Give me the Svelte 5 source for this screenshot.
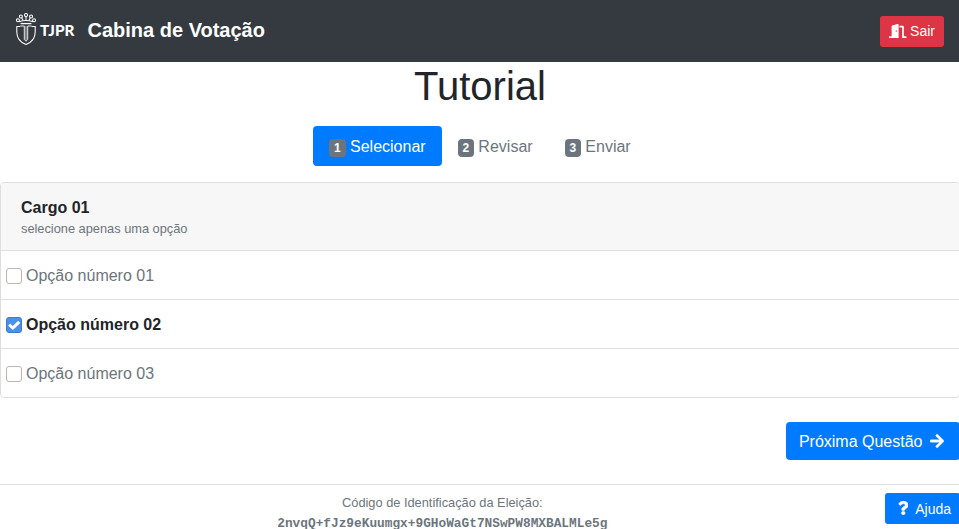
<script>
  const steps = ['Selecionar', 'Revisar', 'Enviar'];
  const options = ['Opção número 01', 'Opção número 02', 'Opção número 03'];
  let current = $state(0);
  let selected = $state(1);
</script>

<div class="page">
  <nav class="navbar">
    <div class="brand">
      <svg class="logo" width="60" height="34" viewBox="0 0 60 34" role="img" aria-label="TJPR">
        <g fill="none" stroke="#fff" stroke-width="1.05">
          <circle cx="1.9" cy="7.2" r="1.5" />
          <circle cx="4.9" cy="3.4" r="1.5" />
          <circle cx="10" cy="2.1" r="1.6" />
          <circle cx="15.1" cy="3.4" r="1.5" />
          <circle cx="18.1" cy="7.2" r="1.5" />
          <path d="M3 8.7Q10 6.2 17 8.7M5.6 4.8L7 7.1M10 3.7V7M14.4 4.8L13 7.1" />
          <path d="M4.6 10.6H15.4" stroke-width="1.3" />
          <path d="M4.3 13.4H.8V19C.8 25.2 4 29.2 10 31.5C16 29.2 19.2 25.2 19.2 19V13.4H15.7" />
          <path d="M4.3 13H8.3V26.6L10 28.2L11.7 26.6V13H15.7" stroke-width=".9" />
          <path d="M10 13V27" stroke-width=".7" />
        </g>
        <text x="24" y="22.8" textLength="34.4" lengthAdjust="spacingAndGlyphs">TJPR</text>
      </svg>
      <span class="brand-name">Cabina de Votação</span>
    </div>
    <button class="btn small danger">
      <svg class="door" viewBox="0 0 640 512"><path d="M624 448h-80V113.45C544 86.19 522.47 64 496 64H384v64h96v384h144c8.84 0 16-7.16 16-16v-32c0-8.84-7.16-16-16-16zM312.24 1.01l-192 49.74C105.99 54.44 96 67.54 96 82.92V448H16c-8.84 0-16 7.16-16 16v32c0 8.84 7.16 16 16 16h336V33.18c0-21.58-19.56-37.41-39.76-32.17zM264 288c-13.25 0-24-14.33-24-32s10.75-32 24-32 24 14.33 24 32-10.75 32-24 32z" /></svg>
      <span>Sair</span>
    </button>
  </nav>

  <h1>Tutorial</h1>

  <div class="pills">
    {#each steps as step, i}
      <button class="pill" class:active={current === i} onclick={() => (current = i)}><span class="badge">{i + 1}</span> {step}</button>
    {/each}
  </div>

  <section class="card">
    <header>
      <strong>Cargo 01</strong>
      <small>selecione apenas uma opção</small>
    </header>
    {#each options as option, i}
      <button class="option" class:checked={selected === i} onclick={() => (selected = i)}>
        <span class="box">
          {#if selected === i}
            <svg viewBox="0 0 16 16"><path d="M3.2 7.6L6.9 11L13.2 4.9" /></svg>
          {/if}
        </span>
        <span class="label">{option}</span>
      </button>
    {/each}
  </section>

  <div class="actions">
    <button class="btn primary next">
      <span>Próxima Questão</span>
      <svg class="arrow" viewBox="0 0 448 512"><path d="M190.5 66.9l22.2-22.2c9.4-9.4 24.6-9.4 33.9 0L441 239c9.4 9.4 9.4 24.6 0 33.9L246.6 467.3c-9.4 9.4-24.6 9.4-33.9 0l-22.2-22.2c-9.5-9.5-9.3-25 .4-34.3L311.4 296H24c-13.3 0-24-10.7-24-24v-32c0-13.3 10.7-24 24-24h287.4L190.9 101.2c-9.8-9.3-10-24.8-.4-34.3z" /></svg>
    </button>
  </div>

  <footer>
    <div class="code">
      <span>Código de Identificação da Eleição:</span>
      <code>2nvqQ+fJz9eKuumgx+9GHoWaGt7NSwPW8MXBALMLe5g</code>
    </div>
    <button class="btn small primary help">
      <svg class="question" viewBox="0 0 384 512"><path d="M202.021 0C122.202 0 70.503 32.703 29.914 91.026c-7.363 10.58-5.093 25.086 5.178 32.874l43.138 32.709c10.373 7.865 25.132 6.026 33.253-4.148 25.049-31.381 43.63-49.449 82.757-49.449 30.764 0 68.816 19.799 68.816 49.631 0 22.552-18.617 34.134-48.993 51.164-35.423 19.86-82.299 44.576-82.299 106.405V320c0 13.255 10.745 24 24 24h72.471c13.255 0 24-10.745 24-24v-5.773c0-42.86 125.268-44.645 125.268-160.627C377.504 66.256 286.902 0 202.021 0zM192 373.459c-38.196 0-69.271 31.075-69.271 69.271 0 38.195 31.075 69.27 69.271 69.27s69.271-31.075 69.271-69.271-31.075-69.27-69.271-69.27z" /></svg>
      <span>Ajuda</span>
    </button>
  </footer>
</div>

<style>
  :global(body) {
    margin: 0;
    background: #fff;
    overflow: hidden;
  }
  .page, .page * {
    box-sizing: border-box;
  }
  .page {
    width: 960px;
    height: 529px;
    overflow: hidden;
    font: 16px/24px "Liberation Sans", Arial, sans-serif;
    color: #212529;
  }
  button {
    margin: 0;
    border: 0;
    background: none;
    font: inherit;
    color: inherit;
    cursor: pointer;
  }
  .navbar {
    display: flex;
    align-items: center;
    justify-content: space-between;
    height: 62px;
    padding: 0 16px;
    background: #343a40;
    color: #fff;
  }
  .brand {
    display: flex;
    align-items: center;
    gap: 11.5px;
  }
  .logo {
    display: block;
    margin-top: -2px;
  }
  .logo text {
    font: 900 14.6px Lato, sans-serif;
    fill: #fff;
  }
  .brand-name {
    font-size: 20px;
    line-height: 30px;
    font-weight: 700;
    margin-top: -2px;
  }
  .btn {
    display: flex;
    align-items: center;
    color: #fff;
    white-space: nowrap;
  }
  .btn svg {
    display: block;
    fill: #fff;
  }
  .small {
    height: 31px;
    padding: 0 9px;
    border-radius: 3px;
    font-size: 14px;
    line-height: 21px;
  }
  .danger {
    gap: 3.5px;
    background: #dc3545;
  }
  .primary {
    background: #007bff;
  }
  .door {
    width: 17.5px;
    height: 14px;
    margin-top: -1px;
  }
  h1 {
    margin: 0 0 16px;
    font-size: 40px;
    line-height: 48px;
    font-weight: 400;
    text-align: center;
  }
  .pills {
    display: flex;
    justify-content: center;
    margin-bottom: 16px;
  }
  .pill {
    height: 40px;
    padding: 9px 16px 7px;
    border-radius: 4px;
    color: #6c757d;
  }
  .pill.active {
    background: #007bff;
    color: #fff;
  }
  .badge {
    display: inline-block;
    padding: 3px 4.8px;
    border-radius: 4px;
    background: #6c757d;
    color: #fff;
    font-size: 12px;
    line-height: 12px;
    font-weight: 700;
    vertical-align: baseline;
  }
  .card {
    border: 1px solid #dfdfdf;
    border-radius: 4px;
    overflow: hidden;
  }
  .card header {
    display: flex;
    flex-direction: column;
    height: 68px;
    padding: 13px 20px 11px;
    background: #f7f7f7;
    border-bottom: 1px solid #dfdfdf;
  }
  .card small {
    margin-top: -1px;
    font-size: 12.8px;
    line-height: 19px;
    color: #6c757d;
  }
  .option {
    display: flex;
    align-items: center;
    gap: 4px;
    width: 100%;
    height: 49px;
    padding: 0 5px;
    border-bottom: 1px solid #dfdfdf;
    color: #6c757d;
  }
  .option:last-child {
    height: 48px;
    border-bottom: 0;
  }
  .label {
    padding-top: 2px;
  }
  .checked {
    color: #212529;
    font-weight: 700;
  }
  .box {
    width: 16px;
    height: 16px;
    margin-top: 2px;
    border: 1px solid #bdb5ae;
    border-radius: 3px;
    background: #fff;
  }
  .checked .box {
    border-color: #3c79cf;
    background: #4b91eb;
  }
  .box svg {
    display: block;
    width: 16px;
    height: 16px;
    margin: -1px;
    fill: none;
    stroke: #fff;
    stroke-width: 3;
  }
  .actions {
    display: flex;
    justify-content: flex-end;
    margin: 24px 0;
  }
  .next {
    height: 38px;
    padding: 2px 16px 0 13px;
    gap: 7.5px;
    border-radius: 4px;
  }
  .arrow {
    width: 14px;
    height: 16px;
    margin-top: -2px;
    stroke: #fff;
    stroke-width: 12;
  }
  footer {
    display: flex;
    align-items: flex-start;
    height: 45px;
    padding-top: 8px;
    border-top: 1px solid #dfdfdf;
  }
  .code {
    flex: 1;
    display: flex;
    flex-direction: column;
    align-items: center;
    font-size: 12.8px;
    line-height: 19px;
    color: #6c757d;
  }
  .code code {
    font: 700 12.8px/19px "Liberation Mono", monospace;
    margin-top: 2px;
  }
  .help {
    gap: 7px;
    padding: 2px 9px 0 13px;
  }
  .question {
    width: 10.5px;
    height: 14px;
    margin-top: -3px;
    stroke: #fff;
    stroke-width: 16;
  }
</style>
